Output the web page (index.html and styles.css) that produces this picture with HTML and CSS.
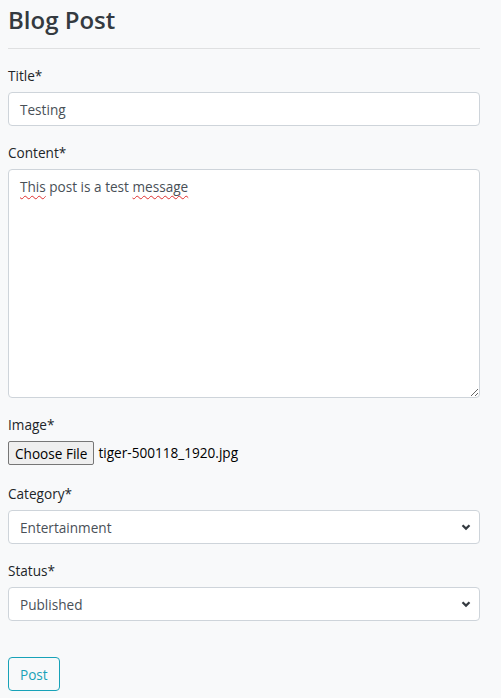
FILE: index.html
```html
<!DOCTYPE html>
<html lang="en">
<head>
<meta charset="utf-8">
<title>Blog Post</title>
<link rel="stylesheet" href="styles.css">
</head>
<body>
<main class="page">
  <h3 class="page-title">Blog Post</h3>
  <hr class="divider">
  <form class="post-form">
    <div class="form-group">
      <label class="form-label">Title*</label>
      <div class="form-control">Testing</div>
    </div>
    <div class="form-group">
      <label class="form-label">Content*</label>
      <div class="form-control form-textarea"><span class="spell">This</span> post is a test <span class="spell">message</span></div>
    </div>
    <div class="form-group">
      <label class="form-label">Image*</label>
      <div class="file-row">
        <span class="file-btn">Choose File</span>
        <span class="file-name">tiger-500118_1920.jpg</span>
      </div>
    </div>
    <div class="form-group">
      <label class="form-label">Category*</label>
      <div class="form-control form-select">Entertainment
        <svg class="chevron" width="10" height="8" viewBox="0 0 10 8"><path d="M1.5 2.2 L5 5.6 L8.5 2.2" fill="none" stroke="#343a40" stroke-width="2.2"/></svg>
      </div>
    </div>
    <div class="form-group">
      <label class="form-label">Status*</label>
      <div class="form-control form-select">Published
        <svg class="chevron" width="10" height="8" viewBox="0 0 10 8"><path d="M1.5 2.2 L5 5.6 L8.5 2.2" fill="none" stroke="#343a40" stroke-width="2.2"/></svg>
      </div>
    </div>
    <div class="actions">
      <button type="button" class="btn-post">Post</button>
    </div>
  </form>
</main>
</body>
</html>
```
FILE: styles.css
```css
html, body {
  margin: 0;
  padding: 0;
  background: #f8f9fa;
}
body {
  font-family: "Open Sans", "Noto Sans", sans-serif;
  font-size: 13.6px;
  color: #212529;
}
.page {
  width: 472px;
  padding: 0 8px;
}
.page-title {
  margin: 0;
  padding-top: 3px;
  font-size: 24px;
  line-height: 33px;
  font-weight: 600;
  color: #343a40;
}
.divider {
  margin: 12px 0 0;
  border: 0;
  border-top: 1px solid #dfe0e1;
}
.post-form {
  display: flex;
  flex-direction: column;
  padding-top: 16px;
}
.form-group {
  display: flex;
  flex-direction: column;
  margin-bottom: 16px;
}
.form-label {
  display: block;
  line-height: 21px;
  margin-bottom: 6px;
}
.form-control {
  box-sizing: border-box;
  height: 34px;
  padding: 0 11px;
  display: flex;
  align-items: center;
  background: #fff;
  border: 1px solid #ced4da;
  border-radius: 4px;
  color: #495057;
  position: relative;
}
.form-textarea {
  height: 229px;
  padding-top: 6px;
  line-height: 21px;
  resize: vertical;
  overflow: auto;
  display: block;
}
.spell {
  text-decoration: underline wavy #e03030;
  text-decoration-thickness: 1px;
  text-underline-offset: 3px;
}
.file-row {
  display: flex;
  align-items: flex-start;
  height: 26px;
  gap: 4px;
  color: #000;
}
.file-name {
  line-height: 24px;
}
.file-btn {
  box-sizing: border-box;
  height: 24px;
  padding: 0 6px;
  display: flex;
  align-items: center;
  background: #efefef;
  border: 1px solid #767676;
  border-radius: 2px;
  color: #000;
}
.form-select .chevron {
  position: absolute;
  right: 8px;
  top: 12px;
}
.actions {
  padding-top: 20px;
}
.btn-post {
  box-sizing: border-box;
  height: 34px;
  padding: 0 11px;
  font-family: inherit;
  font-size: 13.6px;
  color: #17a2b8;
  background: transparent;
  border: 1px solid #17a2b8;
  border-radius: 4px;
}
```
